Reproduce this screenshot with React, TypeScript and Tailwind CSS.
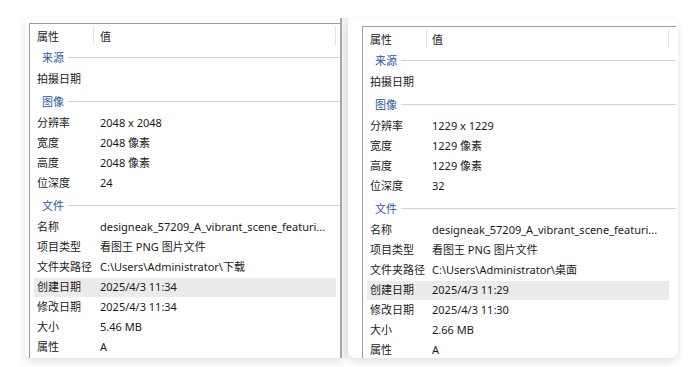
import React from "react";

type Item =
  | { kind: "group"; label: string }
  | { kind: "row"; label: string; value?: string; hl?: boolean };

const leftItems: Item[] = [
  { kind: "group", label: "来源" },
  { kind: "row", label: "拍摄日期" },
  { kind: "group", label: "图像" },
  { kind: "row", label: "分辨率", value: "2048 x 2048" },
  { kind: "row", label: "宽度", value: "2048 像素" },
  { kind: "row", label: "高度", value: "2048 像素" },
  { kind: "row", label: "位深度", value: "24" },
  { kind: "group", label: "文件" },
  { kind: "row", label: "名称", value: "designeak_57209_A_vibrant_scene_featuri..." },
  { kind: "row", label: "项目类型", value: "看图王 PNG 图片文件" },
  { kind: "row", label: "文件夹路径", value: "C:\\Users\\Administrator\\下载" },
  { kind: "row", label: "创建日期", value: "2025/4/3 11:34", hl: true },
  { kind: "row", label: "修改日期", value: "2025/4/3 11:34" },
  { kind: "row", label: "大小", value: "5.46 MB" },
  { kind: "row", label: "属性", value: "A" },
];

const rightItems: Item[] = [
  { kind: "group", label: "来源" },
  { kind: "row", label: "拍摄日期" },
  { kind: "group", label: "图像" },
  { kind: "row", label: "分辨率", value: "1229 x 1229" },
  { kind: "row", label: "宽度", value: "1229 像素" },
  { kind: "row", label: "高度", value: "1229 像素" },
  { kind: "row", label: "位深度", value: "32" },
  { kind: "group", label: "文件" },
  { kind: "row", label: "名称", value: "designeak_57209_A_vibrant_scene_featuri..." },
  { kind: "row", label: "项目类型", value: "看图王 PNG 图片文件" },
  { kind: "row", label: "文件夹路径", value: "C:\\Users\\Administrator\\桌面" },
  { kind: "row", label: "创建日期", value: "2025/4/3 11:29", hl: true },
  { kind: "row", label: "修改日期", value: "2025/4/3 11:30" },
  { kind: "row", label: "大小", value: "2.66 MB" },
  { kind: "row", label: "属性", value: "A" },
];

function PropList({ items, wide }: { items: Item[]; wide?: boolean }) {
  // wide = right window, value column sits 1px closer
  const colW = wide ? "w-[69px]" : "w-[70px]";

  return (
    <div className="h-full flex-1 overflow-hidden border-l border-t border-[#9d9d9d]">
      {/* header */}
      <div className="relative flex h-[21px] w-[306px] items-center pt-[3px]">
        <div className={`${colW} pl-[7px]`}>属性</div>
        <div>值</div>
        <div className="absolute left-[63px] top-[2px] h-[19px] w-px bg-[#e3e3e3]" />
        <div className="absolute right-0 top-[2px] h-[19px] w-px bg-[#e3e3e3]" />
      </div>

      {items.map((it, i) =>
        it.kind === "group" ? (
          <div key={i} className="flex h-[24px] items-center pl-[12px]">
            <span className="text-[#2a56a8]">{it.label}</span>
            <div className="ml-[4px] h-px flex-1 bg-[#c8d2df]" />
          </div>
        ) : (
          <div key={i} className="flex h-[20px] w-[306px] items-center pl-[4px]">
            <div
              className={`flex h-[19px] flex-1 items-center pb-[1px] ${
                it.hl ? "bg-[#ebebeb]" : ""
              }`}
            >
              <div className={`${colW} shrink-0 pl-[3px]`}>{it.label}</div>
              <div className="-ml-[4px] whitespace-nowrap">{it.value}</div>
            </div>
          </div>
        )
      )}
    </div>
  );
}

export default function App() {
  return (
    <div
      className="relative h-[367px] w-[691px] overflow-hidden bg-white text-[11px] leading-none text-[#1a1a1a]"
      style={{ fontFamily: '"Noto Sans", "Noto Sans CJK SC", sans-serif' }}
    >
      <div className="flex h-full pl-[25px] pt-[18px]">
        {/* left window */}
        <div className="flex h-[340px] w-[317px] rounded-l-[6px] bg-white pl-[4px] pt-[5px] shadow-[0_4px_9px_rgba(0,0,0,0.12)]">
          <PropList items={leftItems} />
          <div className="-mt-[5px] w-[2px] bg-[#a8a8a8]" />
        </div>

        {/* gap between the two shots */}
        <div className="h-[340px] w-[6px] bg-[#f1f1f1]" />

        {/* right window */}
        <div className="flex h-[340px] w-[330px] rounded-[8px] bg-white pl-[14px] pr-[2px] pt-[8px] shadow-[0_4px_9px_rgba(0,0,0,0.12)]">
          <PropList items={rightItems} wide />
        </div>
      </div>
    </div>
  );
}
